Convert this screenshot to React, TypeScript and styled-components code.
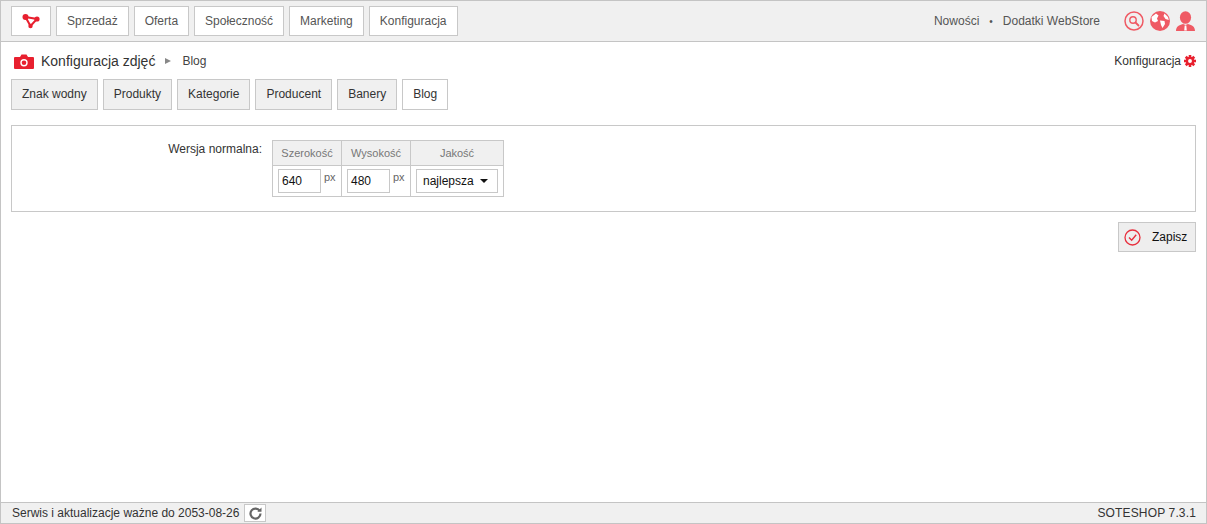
import React from "react";
import styled, { createGlobalStyle } from "styled-components";

const GlobalStyle = createGlobalStyle`
  html, body {
    margin: 0;
    padding: 0;
    height: 100%;
    background: #fff;
  }
  body {
    font-family: "Liberation Sans", Arial, sans-serif;
    font-size: 12px;
    color: #333;
  }
  * {
    box-sizing: border-box;
  }
`;

const Page = styled.div`
  width: 1207px;
  height: 524px;
  display: flex;
  flex-direction: column;
  border-left: 1px solid #c4c4c4;
  border-right: 1px solid #c4c4c4;
  border-bottom: 1px solid #c4c4c4;
  overflow: hidden;
`;

const TopBar = styled.div`
  height: 42px;
  flex: none;
  display: flex;
  align-items: flex-start;
  justify-content: space-between;
  padding: 5px 11px 0 10px;
  background: #f0f0f0;
  border-top: 1px solid #c4c4c4;
  border-bottom: 1px solid #c4c4c4;
`;

const Menu = styled.div`
  display: flex;
  gap: 5px;
`;

const MenuButton = styled.div<{ $logo?: boolean }>`
  height: 30px;
  padding: 0 10px;
  width: ${(p) => (p.$logo ? "40px" : "auto")};
  display: flex;
  align-items: center;
  justify-content: center;
  background: #fff;
  border: 1px solid #c8c8c8;
  color: #555;
  font-size: 12px;
`;

const TopRight = styled.div`
  height: 30px;
  display: flex;
  align-items: center;
  color: #555;
`;

const TopLink = styled.span`
  font-size: 12px;
`;

const Dot = styled.span`
  margin: 0 10px;
  font-size: 10px;
`;

const IconRow = styled.div`
  display: flex;
  align-items: center;
  gap: 6px;
  margin-left: 24px;
`;

const Content = styled.div`
  flex: 1;
  padding: 0 10px;
  display: flex;
  flex-direction: column;
`;

const TitleRow = styled.div`
  height: 37px;
  flex: none;
  display: flex;
  align-items: center;
  justify-content: space-between;
`;

const Crumbs = styled.div`
  display: flex;
  align-items: center;
`;

const CameraWrap = styled.span`
  display: flex;
  margin: 1px 7px 0 3px;
`;

const Title = styled.span`
  font-size: 14px;
  color: #333;
`;

const CrumbArrow = styled.span`
  width: 0;
  height: 0;
  margin: 1px 11px 0 10px;
  border-left: 6px solid #888;
  border-top: 3.5px solid transparent;
  border-bottom: 3.5px solid transparent;
`;

const Crumb = styled.span`
  font-size: 12px;
  color: #444;
`;

const ConfigLink = styled.div`
  display: flex;
  align-items: center;
  gap: 3px;
  font-size: 12px;
  color: #333;
`;

const Tabs = styled.div`
  display: flex;
  gap: 5px;
  flex: none;
`;

const Tab = styled.div<{ $active?: boolean }>`
  height: 31px;
  padding: 0 10px 1px;
  display: flex;
  align-items: center;
  background: ${(p) => (p.$active ? "#fff" : "#f0f0f0")};
  border: 1px solid #c8c8c8;
  color: #333;
  font-size: 12px;
`;

const Panel = styled.div`
  margin-top: 15px;
  height: 87px;
  flex: none;
  display: flex;
  align-items: flex-start;
  padding: 14px 0 0;
  border: 1px solid #c8c8c8;
`;

const FieldLabel = styled.div`
  width: 250px;
  text-align: right;
  padding-top: 2px;
  margin-right: 10px;
  font-size: 12px;
  color: #333;
`;

const SizeTable = styled.table`
  border-collapse: collapse;
  font-size: 11px;
  th, td {
    border: 1px solid #c8c8c8;
  }
`;

const Head = styled.th<{ $w: number }>`
  width: ${(p) => p.$w}px;
  height: 25px;
  padding: 0;
  background: #f0f0f0;
  color: #777;
  font-weight: normal;
  text-align: center;
`;

const Cell = styled.td`
  height: 31px;
  padding: 0 5px;
  vertical-align: middle;
`;

const CellRow = styled.div`
  display: flex;
  align-items: flex-start;
`;

const NumberBox = styled.div`
  width: 43px;
  height: 24px;
  padding: 4px 0 0 3px;
  background: #fff;
  border: 1px solid #c8c8c8;
  color: #111;
  font-size: 12px;
`;

const Unit = styled.span`
  margin: 2px 0 0 3px;
  color: #666;
  font-size: 11px;
`;

const SelectBox = styled.div`
  width: 82px;
  height: 24px;
  display: flex;
  align-items: center;
  padding-left: 6px;
  background: #fff;
  border: 1px solid #c8c8c8;
  color: #111;
  font-size: 12px;
`;

const Caret = styled.span`
  margin-left: 6px;
  width: 0;
  height: 0;
  border-top: 4px solid #111;
  border-left: 4px solid transparent;
  border-right: 4px solid transparent;
`;

const Actions = styled.div`
  display: flex;
  justify-content: flex-end;
  margin-top: 10px;
`;

const SaveButton = styled.div`
  width: 78px;
  height: 30px;
  display: flex;
  align-items: center;
  padding-left: 5px;
  gap: 11px;
  background: #eee;
  border: 1px solid #c8c8c8;
  color: #111;
  font-size: 12px;
`;

const StatusBar = styled.div`
  height: 21px;
  flex: none;
  display: flex;
  align-items: center;
  justify-content: space-between;
  padding: 0 10px 0 11px;
  background: #f0f0f0;
  border-top: 1px solid #c4c4c4;
  color: #333;
  font-size: 12px;
`;

const StatusLeft = styled.div`
  display: flex;
  align-items: center;
  gap: 5px;
`;

const Version = styled.span`
  letter-spacing: 0.15px;
`;

const RefreshButton = styled.div`
  width: 22px;
  height: 18px;
  display: flex;
  align-items: center;
  justify-content: center;
  background: #fff;
  border: 1px solid #c8c8c8;
`;

const LogoIcon = () => (
  <svg width="18" height="15" viewBox="0 0 18 15">
    <path d="M3.5 3 L15 5 L8.5 12 Z" fill="none" stroke="#e8202f" strokeWidth="2" />
    <circle cx="3.5" cy="3" r="3" fill="#e8202f" />
    <circle cx="15" cy="5" r="2.6" fill="#e8202f" />
    <circle cx="8.5" cy="12" r="2.2" fill="#e8202f" />
  </svg>
);

const SearchIcon = () => (
  <svg width="20" height="20" viewBox="0 0 20 20">
    <circle cx="10" cy="10" r="9" fill="none" stroke="#ef5a64" strokeWidth="1.5" />
    <circle cx="9" cy="9" r="3.2" fill="none" stroke="#ef5a64" strokeWidth="1.4" />
    <path d="M11.5 11.5 L14.5 14.5" stroke="#ef5a64" strokeWidth="1.8" strokeLinecap="round" />
  </svg>
);

const GlobeIcon = () => (
  <svg width="20" height="20" viewBox="0 0 20 20">
    <circle cx="10" cy="10" r="10" fill="#ef5a64" />
    <path
      d="M1.5 6 L6 2.5 L8.5 4.5 L7 7.5 L8 10 L5 11.5 L2 10 Z M10 9.5 L14.5 10 L15 13 L12.5 17 L11 14 Z M14.5 2.5 L18 6 L18.8 9 L15.5 8 L13.5 5 Z"
      fill="#fff"
    />
  </svg>
);

const UserIcon = () => (
  <svg width="19" height="20" viewBox="0 0 19 20">
    <ellipse cx="9.5" cy="6.5" rx="5.6" ry="6.3" fill="#ef5a64" />
    <path d="M0 20 C0 15.5 3 14 7 13 L9.5 14 L12 13 C16 14 19 15.5 19 20 Z" fill="#ef5a64" />
    <path d="M8.7 14.5 H10.3 L10.8 19.5 H8.2 Z" fill="#fff" />
  </svg>
);

const CameraIcon = () => (
  <svg width="20" height="15" viewBox="0 0 20 15">
    <path
      fillRule="evenodd"
      d="M1 3 H6 L7.5 0.5 H12.5 L14 3 H19 Q20 3 20 4 V14 Q20 15 19 15 H1 Q0 15 0 14 V4 Q0 3 1 3 Z M10 5 A3.7 3.7 0 1 0 10 12.4 A3.7 3.7 0 1 0 10 5 Z M10 6.4 A2.3 2.3 0 1 1 10 11 A2.3 2.3 0 1 1 10 6.4 Z"
      fill="#e8202f"
    />
  </svg>
);

const GearIcon = () => (
  <svg width="12" height="12" viewBox="0 0 13 13">
    {[0, 45, 90, 135].map((a) => (
      <rect key={a} x="5.1" y="0" width="2.8" height="13" fill="#e8202f" transform={`rotate(${a} 6.5 6.5)`} />
    ))}
    <circle cx="6.5" cy="6.5" r="4.6" fill="#e8202f" />
    <circle cx="6.5" cy="6.5" r="2.1" fill="#fff" />
  </svg>
);

const CheckIcon = () => (
  <svg width="17" height="17" viewBox="0 0 17 17">
    <circle cx="8.5" cy="8.5" r="7.5" fill="none" stroke="#e8303e" strokeWidth="1.3" />
    <path d="M5 8.5 L7.7 11.2 L12.2 5.8" fill="none" stroke="#e8303e" strokeWidth="1.4" />
  </svg>
);

const RefreshIcon = () => (
  <svg width="15" height="14" viewBox="0 0 14 14">
    <path d="M11.3 5 A5 5 0 1 0 12 7.5" fill="none" stroke="#666" strokeWidth="2.2" />
    <path d="M8.8 5.8 H13 V1.6 Z" fill="#666" />
  </svg>
);

const menuItems = ["Sprzedaż", "Oferta", "Społeczność", "Marketing", "Konfiguracja"];
const tabs = ["Znak wodny", "Produkty", "Kategorie", "Producent", "Banery", "Blog"];

export default function App() {
  return (
    <>
      <GlobalStyle />
      <Page>
        <TopBar>
          <Menu>
            <MenuButton $logo>
              <LogoIcon />
            </MenuButton>
            {menuItems.map((item) => (
              <MenuButton key={item}>{item}</MenuButton>
            ))}
          </Menu>
          <TopRight>
            <TopLink>Nowości</TopLink>
            <Dot>•</Dot>
            <TopLink>Dodatki WebStore</TopLink>
            <IconRow>
              <SearchIcon />
              <GlobeIcon />
              <UserIcon />
            </IconRow>
          </TopRight>
        </TopBar>
        <Content>
          <TitleRow>
            <Crumbs>
              <CameraWrap>
                <CameraIcon />
              </CameraWrap>
              <Title>Konfiguracja zdjęć</Title>
              <CrumbArrow />
              <Crumb>Blog</Crumb>
            </Crumbs>
            <ConfigLink>
              Konfiguracja
              <GearIcon />
            </ConfigLink>
          </TitleRow>
          <Tabs>
            {tabs.map((tab) => (
              <Tab key={tab} $active={tab === "Blog"}>
                {tab}
              </Tab>
            ))}
          </Tabs>
          <Panel>
            <FieldLabel>Wersja normalna:</FieldLabel>
            <SizeTable>
              <thead>
                <tr>
                  <Head $w={69}>Szerokość</Head>
                  <Head $w={69}>Wysokość</Head>
                  <Head $w={93}>Jakość</Head>
                </tr>
              </thead>
              <tbody>
                <tr>
                  <Cell>
                    <CellRow>
                      <NumberBox>640</NumberBox>
                      <Unit>px</Unit>
                    </CellRow>
                  </Cell>
                  <Cell>
                    <CellRow>
                      <NumberBox>480</NumberBox>
                      <Unit>px</Unit>
                    </CellRow>
                  </Cell>
                  <Cell>
                    <SelectBox>
                      najlepsza
                      <Caret />
                    </SelectBox>
                  </Cell>
                </tr>
              </tbody>
            </SizeTable>
          </Panel>
          <Actions>
            <SaveButton>
              <CheckIcon />
              Zapisz
            </SaveButton>
          </Actions>
        </Content>
        <StatusBar>
          <StatusLeft>
            Serwis i aktualizacje ważne do 2053-08-26
            <RefreshButton>
              <RefreshIcon />
            </RefreshButton>
          </StatusLeft>
          <Version>SOTESHOP 7.3.1</Version>
        </StatusBar>
      </Page>
    </>
  );
}
